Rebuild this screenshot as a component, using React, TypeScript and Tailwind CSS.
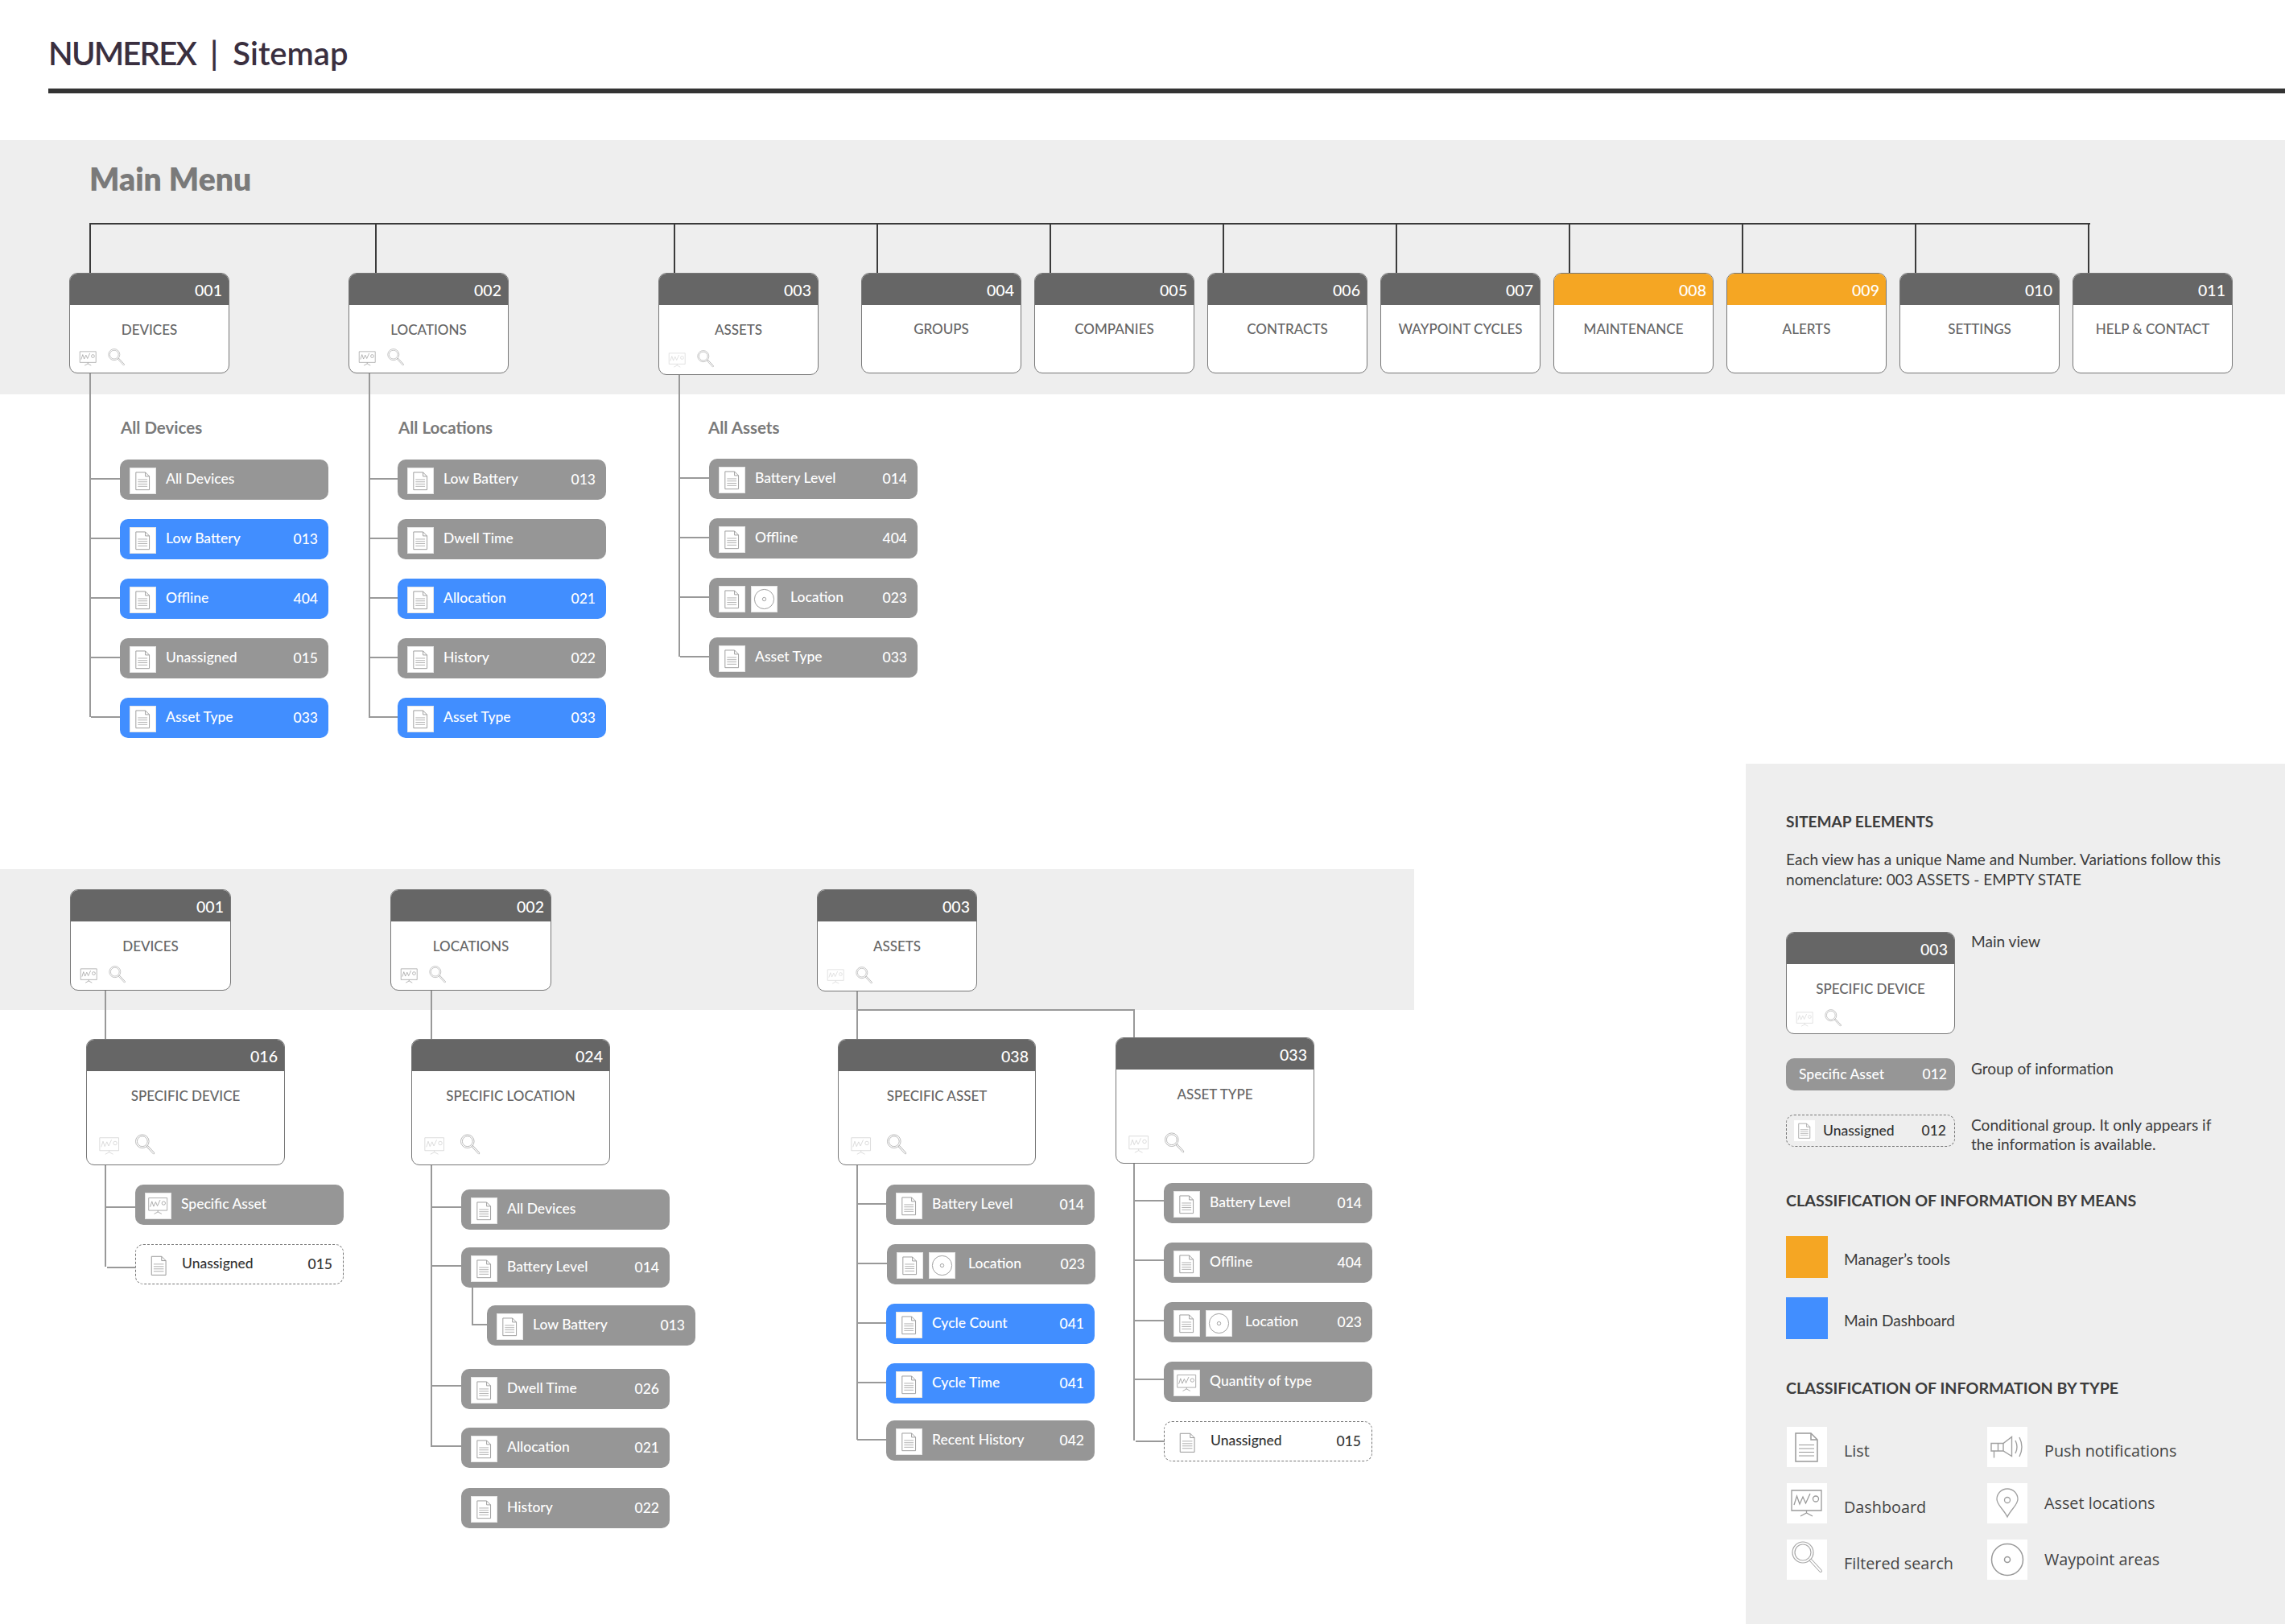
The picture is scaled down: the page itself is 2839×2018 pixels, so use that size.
import type { ReactNode } from "react";

const lato = "font-['Lato','Liberation_Sans',sans-serif]";

function DocIcon() {
  return (
    <svg viewBox="0 0 50 50" className="h-full w-full" fill="none" stroke="#999999" strokeWidth="1.5">
      <path d="M11 8H30L38 16V43H11Z" />
      <path d="M30 8V16H38" />
      <path d="M15 22.5H34M15 27H34M15 31.5H34M15 36H34" strokeWidth="1.2" />
    </svg>
  );
}

function ChartIcon() {
  return (
    <svg viewBox="0 0 50 50" className="h-full w-full" fill="none" stroke="#9a9a9a" strokeWidth="1.3">
      <path d="M6 9H43V34H6Z" />
      <path d="M9 27L12.5 16L16 26L20 17L23.5 25L29 13" />
      <circle cx="36" cy="19.5" r="3.5" />
      <path d="M24.5 34V37M17 41L24.5 37L32 41" />
    </svg>
  );
}

function SearchIcon() {
  return (
    <svg viewBox="0 0 50 50" className="h-full w-full" fill="none" stroke="#a8a8a8" strokeWidth="1.2">
      <circle cx="20" cy="16" r="13" />
      <circle cx="20" cy="16" r="10" />
      <path d="M30 26L42 39" strokeWidth="4" strokeLinecap="round" />
      <path d="M30 26L42 39" strokeWidth="2" stroke="#ffffff" strokeLinecap="round" />
    </svg>
  );
}

function HornIcon() {
  return (
    <svg viewBox="0 0 50 50" className="h-full w-full" fill="none" stroke="#a0a0a0" strokeWidth="1.4">
      <path d="M5 20.5H20L30.5 12.5V36.5L20 30H5Z" />
      <path d="M13.5 20.5V30M20 20.5V30M8.5 30V38.5" />
      <path d="M35 17Q39 25 35 33M40 13Q46 25 40 37" />
    </svg>
  );
}

function PinIcon() {
  return (
    <svg viewBox="0 0 50 50" className="h-full w-full" fill="none" stroke="#a0a0a0" strokeWidth="1.3">
      <path d="M25 42C21 33 12 27 12 20A13 13 0 0 1 38 20C38 27 29 33 25 42Z" />
      <circle cx="25" cy="21" r="3.5" />
    </svg>
  );
}

function DiscIcon() {
  return (
    <svg viewBox="0 0 50 50" className="h-full w-full" fill="none" stroke="#999999" strokeWidth="1.5">
      <circle cx="25" cy="25" r="19.5" />
      <circle cx="25" cy="25" r="3.5" />
    </svg>
  );
}

function Tile({ children }: { children: ReactNode }) {
  return <div className="mt-[3px] h-[33px] w-[33px] shrink-0 border border-[#e6e6e6] bg-white">{children}</div>;
}

function Row({
  branch = "top-[23px]",
  className = "",
  elbow,
  icons = "doc",
  label,
  noBranch,
  num,
  tone = "gray",
}: {
  branch?: string;
  className?: string;
  elbow?: boolean;
  icons?: "doc" | "chart" | "docDisc";
  label: string;
  noBranch?: boolean;
  num?: string;
  tone?: "gray" | "blue" | "dashed";
}) {
  const skin =
    tone === "blue"
      ? "bg-[#418eff] text-white"
      : tone === "dashed"
        ? "border-[1.5px] border-dashed border-[#777] bg-white text-[#333]"
        : "bg-[#969696] text-white";
  return (
    <div
      className={`relative flex h-[50px] w-[259px] items-center rounded-[10px] pr-[13px] pl-[12px] text-[17.5px] font-medium ${skin} ${className}`}
    >
      {!noBranch && !elbow && <span className={`absolute right-full h-[2px] w-[36px] bg-[#999] ${branch}`} />}
      {elbow && (
        <span className="absolute top-[-22px] left-[-19px] h-[47px] w-[19px] border-b-2 border-l-2 border-[#999]" />
      )}
      {tone === "dashed" ? (
        <div className="mt-[3px] h-[33px] w-[33px] shrink-0">
          <DocIcon />
        </div>
      ) : (
        <Tile>{icons === "chart" ? <ChartIcon /> : <DocIcon />}</Tile>
      )}
      {icons === "docDisc" && (
        <div className="ml-[7px]">
          <Tile>
            <DiscIcon />
          </Tile>
        </div>
      )}
      <span className={`${icons === "docDisc" ? "ml-[16px]" : "ml-[12px]"} mb-px`}>{label}</span>
      {num && <span className="ml-auto pt-px">{num}</span>}
    </div>
  );
}

function Card({
  big,
  className,
  faded,
  icons,
  label,
  num,
  orange,
}: {
  big?: boolean;
  className: string;
  faded?: boolean;
  icons?: boolean;
  label: string;
  num: string;
  orange?: boolean;
}) {
  const size = big ? "h-[32px] w-[32px]" : "h-[27px] w-[27px]";
  return (
    <div className={`flex shrink-0 flex-col overflow-hidden rounded-[10px] border-[1.5px] border-[#777] bg-white ${className}`}>
      <div
        className={`flex h-[39px] shrink-0 items-center justify-end pt-[3px] pr-[8px] text-[19.5px] font-medium text-white ${
          orange ? "bg-[#f5a623]" : "bg-[#666]"
        }`}
      >
        {num}
      </div>
      <div className={`text-center text-[17px] leading-[24px] font-medium text-[#666] ${icons ? "pt-[19px]" : "pt-[18px]"}`}>
        {label}
      </div>
      {icons && (
        <div className={big ? "mt-auto flex gap-[12px] pb-[7px] pl-[12px]" : "mt-auto flex gap-[8px] pb-[4px] pl-[9px]"}>
          <div className={`${size} ${faded ? "opacity-40" : ""}`}>
            <ChartIcon />
          </div>
          <div className={size}>
            <SearchIcon />
          </div>
        </div>
      )}
    </div>
  );
}

function Stem({ className, dark }: { className: string; dark?: boolean }) {
  return <div className={`w-[2px] ${dark ? "bg-[#3a3a3a]" : "bg-[#999]"} ${className}`} />;
}

function TreeList({
  children,
  className,
  gap = "gap-[24px]",
  trunk = "bottom-[26px]",
}: {
  children: ReactNode;
  className: string;
  gap?: string;
  trunk?: string;
}) {
  return (
    <div className={`relative flex flex-col ${gap} ${className}`}>
      <div className={`absolute top-0 left-0 w-[2px] bg-[#999] ${trunk}`} />
      {children}
    </div>
  );
}

function ListTitle({ children, className }: { children: string; className: string }) {
  return <div className={`text-[20.5px] leading-[24px] font-bold text-[#7a7a7a] ${className}`}>{children}</div>;
}

const plainMenu = [
  { num: "004", label: "GROUPS" },
  { num: "005", label: "COMPANIES" },
  { num: "006", label: "CONTRACTS" },
  { num: "007", label: "WAYPOINT CYCLES" },
  { num: "008", label: "MAINTENANCE", orange: true },
  { num: "009", label: "ALERTS", orange: true },
  { num: "010", label: "SETTINGS" },
  { num: "011", label: "HELP & CONTACT" },
];

function MainMenu() {
  return (
    <section className="h-[316px] bg-[#eeeeee] pt-[25px]">
      <h2 className="ml-[111px] text-[39px] leading-[46px] font-extrabold text-[#7a7a7a]">Main Menu</h2>
      <div className="mt-[32px] ml-[111px] h-[2px] w-[2486px] bg-[#3a3a3a]" />
      <div className="flex items-start pl-[86px]">
        <div className="w-[347px] shrink-0">
          <Stem dark className="ml-[25px] h-[60px]" />
          <Card className="h-[125px] w-[199px]" num="001" label="DEVICES" icons />
          <TreeList className="ml-[25px] pt-[55px] pl-[38px]">
            <ListTitle className="mb-[4px] ml-px">All Devices</ListTitle>
            <Row label="All Devices" />
            <Row label="Low Battery" num="013" tone="blue" />
            <Row label="Offline" num="404" tone="blue" />
            <Row label="Unassigned" num="015" />
            <Row label="Asset Type" num="033" tone="blue" />
          </TreeList>
        </div>
        <div className="w-[385px] shrink-0">
          <Stem dark className="ml-[33px] h-[60px]" />
          <Card className="h-[125px] w-[199px]" num="002" label="LOCATIONS" icons />
          <TreeList className="ml-[25px] pt-[55px] pl-[36px]">
            <ListTitle className="mb-[4px] ml-px">All Locations</ListTitle>
            <Row label="Low Battery" num="013" />
            <Row label="Dwell Time" />
            <Row label="Allocation" num="021" tone="blue" />
            <Row label="History" num="022" />
            <Row label="Asset Type" num="033" tone="blue" />
          </TreeList>
        </div>
        <div className="w-[252px] shrink-0">
          <Stem dark className="ml-[19px] h-[60px]" />
          <Card className="h-[127px] w-[199px]" num="003" label="ASSETS" icons faded />
          <TreeList className="ml-[25px] pt-[53px] pl-[38px]">
            <ListTitle className="mb-[3px] -ml-px">All Assets</ListTitle>
            <Row label="Battery Level" num="014" />
            <Row label="Offline" num="404" />
            <Row label="Location" num="023" icons="docDisc" />
            <Row label="Asset Type" num="033" />
          </TreeList>
        </div>
        {plainMenu.map((item) => (
          <div className="w-[215px] shrink-0" key={item.num}>
            <Stem dark className="ml-[19px] h-[60px]" />
            <Card className="h-[125px] w-[199px]" num={item.num} label={item.label} orange={item.orange} />
          </div>
        ))}
      </div>
    </section>
  );
}

function LowerTrees() {
  return (
    <div className="flex h-[175px] w-[1757px] items-start bg-[#eeeeee] pt-[25px] pl-[87px]">
      <div className="w-[398px] shrink-0">
        <Card className="h-[126px] w-[200px]" num="001" label="DEVICES" icons />
        <Stem className="ml-[43px] h-[60px]" />
        <Card className="ml-[20px] h-[157px] w-[247px]" num="016" label="SPECIFIC DEVICE" icons faded big />
        <TreeList className="ml-[43px] pt-[24px] pl-[38px]" trunk="bottom-[22px]">
          <Row branch="top-[27px]" label="Specific Asset" icons="chart" />
          <Row branch="top-[27px]" label="Unassigned" num="015" tone="dashed" />
        </TreeList>
      </div>
      <div className="w-[530px] shrink-0">
        <Card className="h-[126px] w-[200px]" num="002" label="LOCATIONS" icons />
        <Stem className="ml-[50px] h-[60px]" />
        <Card className="ml-[26px] h-[157px] w-[247px]" num="024" label="SPECIFIC LOCATION" icons faded big />
        <TreeList className="ml-[50px] pt-[30px] pl-[38px]" gap="gap-[22px]" trunk="bottom-[101px]">
          <Row branch="top-[21px]" label="All Devices" />
          <Row branch="top-[22px]" label="Battery Level" num="014" />
          <Row className="ml-[32px]" elbow label="Low Battery" num="013" />
          <Row branch="top-[20px]" className="mt-[7px]" label="Dwell Time" num="026" />
          <Row branch="top-[22px]" className="mt-px" label="Allocation" num="021" />
          <Row className="mt-[3px]" noBranch label="History" num="022" />
        </TreeList>
      </div>
      <div className="shrink-0">
        <Card className="h-[127px] w-[199px]" num="003" label="ASSETS" icons faded />
        <Stem className="ml-[49px] h-[22px]" />
        <div className="ml-[49px] h-[2px] w-[346px] bg-[#999]" />
        <div className="ml-[26px] flex items-start">
          <div className="w-[345px] shrink-0">
            <Stem className="ml-[23px] h-[35px]" />
            <Card className="h-[157px] w-[246px]" num="038" label="SPECIFIC ASSET" icons faded big />
            <TreeList className="ml-[23px] pt-[24px] pl-[37px]">
              <Row label="Battery Level" num="014" />
              <Row className="ml-px" label="Location" num="023" icons="docDisc" />
              <Row label="Cycle Count" num="041" tone="blue" />
              <Row label="Cycle Time" num="041" tone="blue" />
              <Row className="-mt-[3px]" label="Recent History" num="042" />
            </TreeList>
          </div>
          <div className="shrink-0">
            <Stem className="ml-[22px] h-[33px]" />
            <Card className="h-[157px] w-[247px]" num="033" label="ASSET TYPE" icons faded big />
            <TreeList className="ml-[22px] pt-[24px] pl-[38px]">
              <Row branch="top-[21px]" label="Battery Level" num="014" />
              <Row branch="top-[21px]" label="Offline" num="404" />
              <Row branch="top-[22px]" label="Location" num="023" icons="docDisc" />
              <Row branch="top-[21px]" label="Quantity of type" icons="chart" />
              <Row label="Unassigned" num="015" tone="dashed" />
            </TreeList>
          </div>
        </div>
      </div>
    </div>
  );
}

function TypeItem({ icon, label, labelClass = "" }: { icon: ReactNode; label: string; labelClass?: string }) {
  return (
    <div className="flex h-[50px] items-center gap-[21px]">
      <div className="h-[50px] w-[50px] shrink-0 bg-white">{icon}</div>
      <span className={`font-['Open_Sans',sans-serif] text-[19.8px] text-[#444] ${labelClass}`}>{label}</span>
    </div>
  );
}

function Legend() {
  return (
    <aside className="h-[1069px] flex-1 bg-[#eeeeee] pt-[60px] pl-[50px] text-[19.1px] leading-[24px] text-[#3c3c3c]">
      <h2 className="font-bold">SITEMAP ELEMENTS</h2>
      <p className="mt-[23px] w-[560px] leading-[24.5px]">
        Each view has a unique Name and Number. Variations follow this nomenclature: 003 ASSETS - EMPTY STATE
      </p>
      <div className="mt-[53px] flex gap-[20px]">
        <Card className="h-[127px] w-[210px]" num="003" label="SPECIFIC DEVICE" icons faded />
        <span>Main view</span>
      </div>
      <div className="mt-[30px] flex gap-[20px]">
        <div className="flex h-[40px] w-[210px] shrink-0 items-center justify-between rounded-[10px] bg-[#969696] pr-[10px] pl-[16px] text-[17.5px] font-medium text-white">
          <span>Specific Asset</span>
          <span>012</span>
        </div>
        <span className="pt-px">Group of information</span>
      </div>
      <div className="mt-[30px] flex gap-[20px]">
        <div className="flex h-[40px] w-[210px] shrink-0 items-center rounded-[10px] border-[1.5px] border-dashed border-[#777] pr-[10px] pl-[9px] text-[17.5px] font-medium text-[#333]">
          <div className="h-[26px] w-[26px] shrink-0 bg-white">
            <DocIcon />
          </div>
          <span className="ml-[10px]">Unassigned</span>
          <span className="ml-auto">012</span>
        </div>
        <span className="w-[320px] pt-px">Conditional group. It only appears if the information is available.</span>
      </div>

      <h2 className="mt-[46px] text-[19.7px] font-bold">CLASSIFICATION OF INFORMATION BY MEANS</h2>
      <div className="mt-[32px] flex h-[52px] items-center gap-[20px]">
        <div className="h-[52px] w-[52px] bg-[#f5a623]" />
        <span className="pt-[5px]">Manager’s tools</span>
      </div>
      <div className="mt-[24px] flex h-[52px] items-center gap-[20px]">
        <div className="h-[52px] w-[52px] bg-[#418eff]" />
        <span className="pt-[5px]">Main Dashboard</span>
      </div>

      <h2 className="mt-[49px] text-[19.7px] font-bold">CLASSIFICATION OF INFORMATION BY TYPE</h2>
      <div className="mt-[36px] ml-px grid w-[500px] grid-cols-[249px_1fr] gap-y-[20px]">
        <TypeItem icon={<DocIcon />} label="List" labelClass="pt-[10px]" />
        <TypeItem icon={<HornIcon />} label="Push notifications" labelClass="pt-[10px]" />
        <TypeItem icon={<ChartIcon />} label="Dashboard" labelClass="pt-[10px]" />
        <TypeItem icon={<PinIcon />} label="Asset locations" />
        <TypeItem icon={<SearchIcon />} label="Filtered search" labelClass="pt-[10px]" />
        <TypeItem icon={<DiscIcon />} label="Waypoint areas" />
      </div>
    </aside>
  );
}

export default function App() {
  return (
    <div className={`h-[2018px] w-[2839px] overflow-hidden bg-white ${lato}`}>
      <header className="h-[174px] pt-[42px] pl-[60px]">
        <h1 className="flex gap-[18px] text-[40px] leading-[48px] font-semibold text-[#3a2f3f]">
          <span className="tracking-[-1.8px]">NUMEREX</span>
          <span>|</span>
          <span>Sitemap</span>
        </h1>
        <div className="mt-[20px] h-[6px] bg-[#333]" />
      </header>
      <MainMenu />
      <div className="mt-[459px] flex">
        <div className="w-[2169px] pt-[131px]">
          <LowerTrees />
        </div>
        <Legend />
      </div>
    </div>
  );
}
